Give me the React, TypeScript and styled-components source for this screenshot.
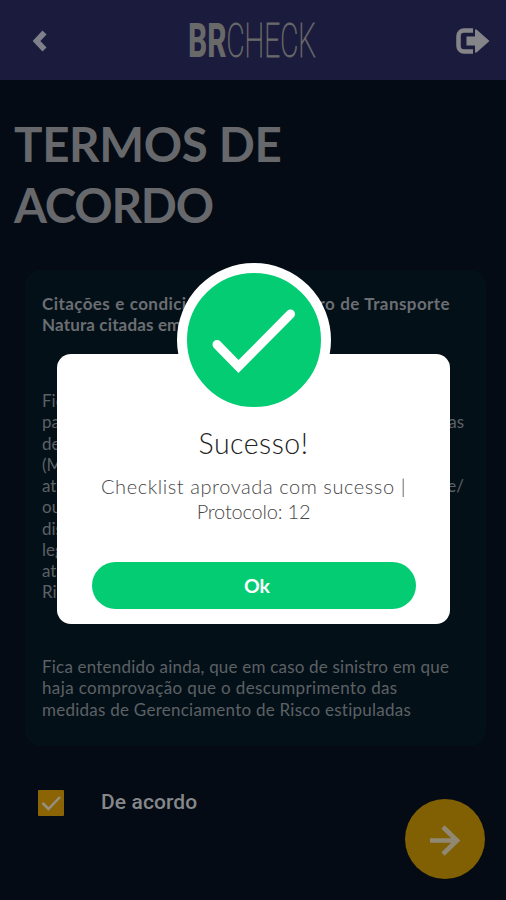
import React from "react";
import styled, { createGlobalStyle } from "styled-components";

const Global = createGlobalStyle`
  * { box-sizing: border-box; }
  body {
    margin: 0;
    background: #040b14;
    font-family: Lato, "Open Sans", sans-serif;
    font-variant-ligatures: none;
  }
  h1, h2, p { margin: 0; }
`;

const Screen = styled.div`
  position: relative;
  width: 506px;
  height: 900px;
  overflow: hidden;
  display: flex;
  flex-direction: column;
  background: #040b14;
`;

const Header = styled.header`
  height: 79.5px;
  flex: none;
  display: flex;
  align-items: center;
  justify-content: space-between;
  padding: 2px 15px 0 32px;
  background: #1b1c3d;
`;

const IconButton = styled.button`
  display: flex;
  padding: 0;
  border: 0;
  background: none;
`;

const Heading = styled.h1`
  padding: 33px 0 0 14px;
  height: 190px;
  flex: none;
  font-size: 47.5px;
  line-height: 61px;
  font-weight: 700;
  color: #67686b;
`;

const Panel = styled.section`
  flex: none;
  height: 476px;
  margin: 0 20px 0 25px;
  padding: 23.5px 0 0 17px;
  border-radius: 16px;
  background: #041018;
  overflow: hidden;
`;

const Paragraph = styled.p<{ $bold?: boolean; $gap?: number }>`
  font-size: 17px;
  line-height: 21.25px;
  font-weight: ${(p) => (p.$bold ? 700 : 400)};
  color: ${(p) => (p.$bold ? "#6b6e72" : "#5c6165")};
  margin-top: ${(p) => p.$gap ?? 0}px;
`;

const Line = styled.span<{ $track?: number; $fill?: number }>`
  display: block;
  white-space: nowrap;
  letter-spacing: ${(p) => p.$track ?? 0}px;
  ${(p) => (p.$fill ? `width: ${p.$fill}px; text-align-last: justify;` : "")}
`;

const Footer = styled.footer`
  flex: 1;
  display: flex;
  align-items: flex-start;
  padding: 44px 21px 0 38px;
`;

const CheckBox = styled.span`
  width: 26px;
  height: 26px;
  display: flex;
  border-radius: 1px;
  background: #8b6505;
`;

const Agree = styled.span`
  margin: -1px auto 0 37px;
  font: 500 21px/26px Roboto, sans-serif;
  letter-spacing: 0.1px;
  color: #85878a;
`;

const NextButton = styled.button`
  width: 80px;
  height: 80px;
  margin-top: 9px;
  padding: 0;
  border: 0;
  border-radius: 50%;
  display: flex;
  background: #806003;
`;

const Overlay = styled.div`
  position: absolute;
  inset: 0;
  display: flex;
  flex-direction: column;
  padding: 354px 56px 0 57px;
`;

const Dialog = styled.div`
  height: 270px;
  border-radius: 14px;
  background: #fff;
  display: flex;
  flex-direction: column;
  align-items: center;
`;

const Badge = styled.div`
  width: 154px;
  height: 154px;
  flex: none;
  margin-top: -91px;
  border: 10px solid #fff;
  border-radius: 50%;
  background: #04cc73;
`;

const DialogTitle = styled.h2`
  margin-top: 9px;
  font-size: 28.5px;
  line-height: 35px;
  font-weight: 300;
  color: #222;
`;

const Message = styled.p`
  margin-top: 13px;
  font-size: 20px;
  line-height: 25px;
  font-weight: 300;
  text-align: center;
  color: #484848;
`;

const OkButton = styled.button`
  width: 324px;
  height: 47px;
  margin-top: 38px;
  padding: 1px 0 0 7px;
  border: 0;
  border-radius: 24px;
  background: #04cc73;
  color: #fff;
  font: 700 19.5px/24px Lato, sans-serif;
`;

export default function App() {
  return (
    <Screen>
      <Global />
      <Header>
        <IconButton aria-label="Voltar">
          <svg width="16" height="24" viewBox="0 0 16 24">
            <path d="M12.500 3.500 4.500 12l8 8.500" fill="none" stroke="#7f808b" strokeWidth="5.600" />
          </svg>
        </IconButton>
        <svg width="136" height="64" viewBox="0 0 136 64" fontFamily="Roboto, sans-serif" fill="#696969">
          <text x="4" y="48" fontSize="48" fontWeight="800" textLength="38.500" lengthAdjust="spacingAndGlyphs">BR</text>
          <text x="42.500" y="48" fontSize="48" fontWeight="100" textLength="89.500" lengthAdjust="spacingAndGlyphs" stroke="#696969" strokeWidth="0.900">CHECK</text>
        </svg>
        <IconButton aria-label="Sair">
          <svg width="36" height="28" viewBox="0 0 36 28">
            <path d="M18 3.500H9A5.500 5.500 0 0 0 3.500 9v10A5.500 5.500 0 0 0 9 24.500h9" fill="none" stroke="#858589" strokeWidth="4.500" />
            <path d="M11.500 9.500H20V2.500h1.500L34.500 14 21.500 25.500H20V18.500h-8.500z" fill="#858589" stroke="#1b1c3d" strokeWidth="4" paintOrder="stroke" />
          </svg>
        </IconButton>
      </Header>
      <Heading>
        <Line $track={-0.35}>TERMOS DE</Line>
        <Line $track={-1.2}>ACORDO</Line>
      </Heading>
      <Panel>
        <Paragraph $bold>
          <Line $fill={408} $track={0.42}>Citações e condicionantes do Seguro de Transporte</Line>
          <Line $track={0.15}>Natura citadas em apólice</Line>
        </Paragraph>
        <Paragraph $gap={54.5}>
          <Line>Fica entendido e acordado que</Line>
          <Line $fill={422}>para os embarques segurados, as medidas adotadas</Line>
          <Line>de Gerenciamento de Risco</Line>
          <Line>(Medidas)</Line>
          <Line $fill={422}>através de empresas de monitoramento, transporte e/</Line>
          <Line>ou</Line>
          <Line>dispositivos</Line>
          <Line>legais</Line>
          <Line>até o Gerenciamento de</Line>
          <Line>Risco.</Line>
        </Paragraph>
        <Paragraph $gap={53.5}>
          <Line $track={0.2}>Fica entendido ainda, que em caso de sinistro em que</Line>
          <Line $track={0.38}>haja comprovação que o descumprimento das</Line>
          <Line $track={0.25}>medidas de Gerenciamento de Risco estipuladas</Line>
        </Paragraph>
      </Panel>
      <Footer>
        <CheckBox role="checkbox" aria-checked="true">
          <svg width="26" height="26" viewBox="0 0 26 26">
            <path d="m4.500 13 6 6L22 7" fill="none" stroke="#969084" strokeWidth="2.500" />
          </svg>
        </CheckBox>
        <Agree>De acordo</Agree>
        <NextButton aria-label="Continuar">
          <svg width="80" height="80" viewBox="0 0 80 80">
            <path d="M25 41.500h27M38 28 52 41.500 38 55" fill="none" stroke="#908873" strokeWidth="4.700" />
          </svg>
        </NextButton>
      </Footer>
      <Overlay>
        <Dialog role="dialog">
          <Badge>
            <svg width="134" height="134" viewBox="0 0 134 134">
              <path d="m30 71.500 21.500 22L103.500 41" fill="none" stroke="#fff" strokeWidth="9" strokeLinecap="round" />
            </svg>
          </Badge>
          <DialogTitle>
            <Line $track={0.5}>Sucesso!</Line>
          </DialogTitle>
          <Message>
            <Line $track={0.57}>Checklist aprovada com sucesso |</Line>
            <Line $track={-0.2}>Protocolo: 12</Line>
          </Message>
          <OkButton>Ok</OkButton>
        </Dialog>
      </Overlay>
    </Screen>
  );
}
